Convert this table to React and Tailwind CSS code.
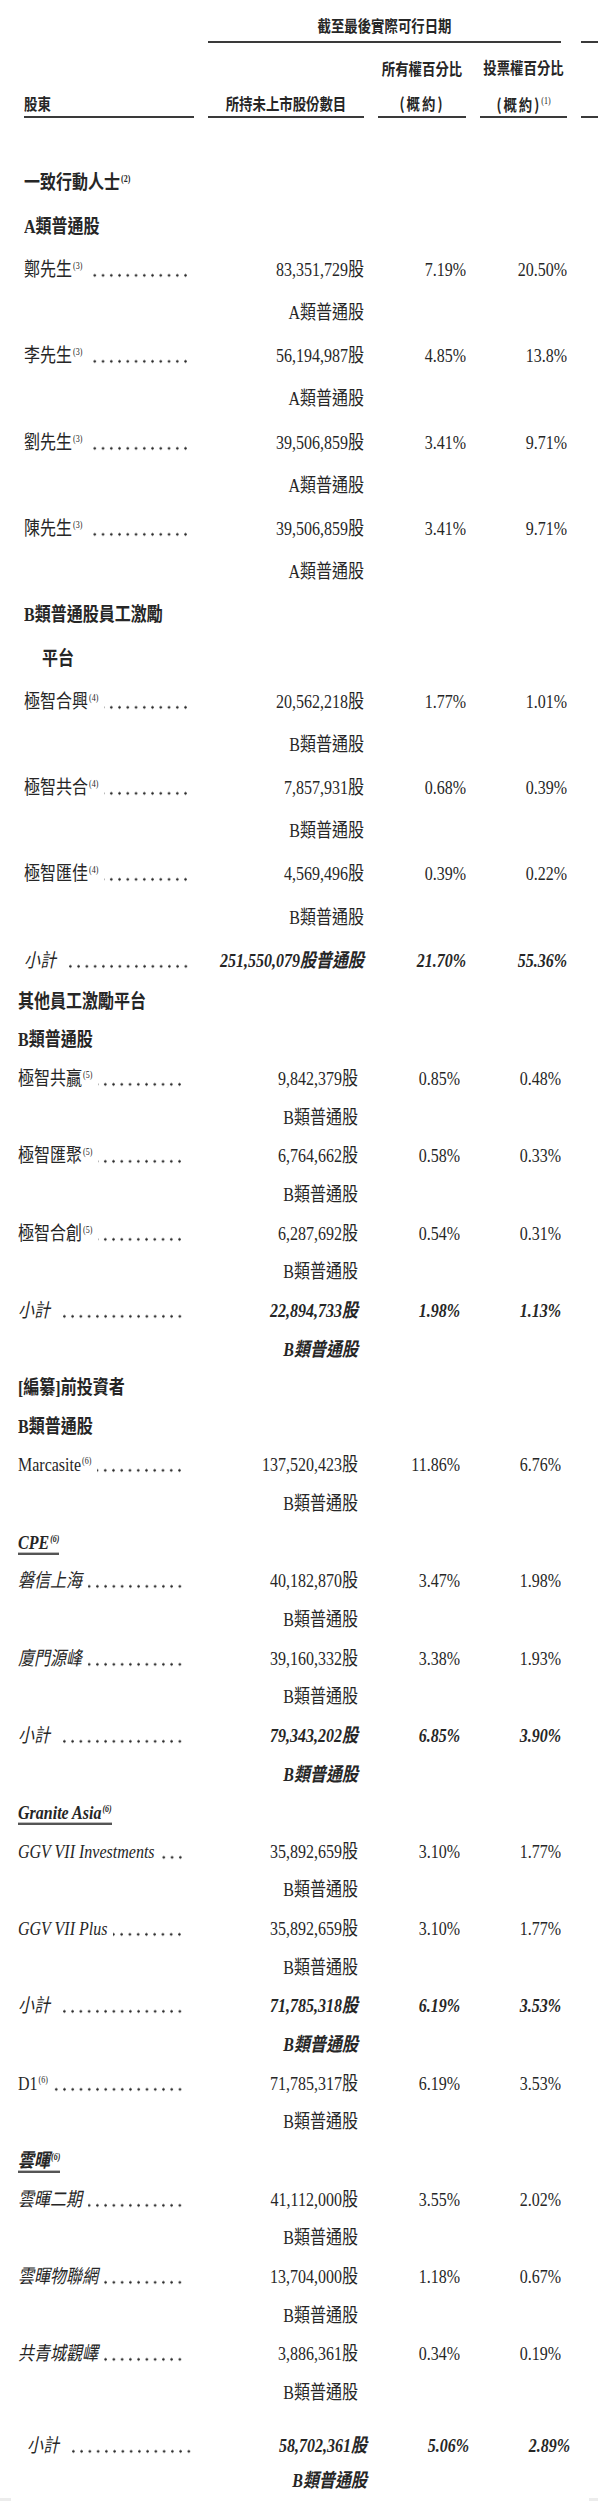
import React from 'react';

const serif = "font-['Liberation_Serif','Noto_Sans_CJK_TC',serif]";
const sans = "font-['Noto_Sans_CJK_TC',sans-serif]";
const cols = 'grid grid-cols-[170px_156px_88px_87px] gap-x-[14px]';
const headCols = 'grid grid-cols-[170px_156px_88px_87px_1fr] gap-x-[14px]';

// section 1: A shares + employee platforms
const part1 = [
    { k: 'group', t: '一致行動人士', sup: '(2)' },
    { k: 'group', t: 'A類普通股' },
    { k: 'row', n: '鄭先生', sup: '(3)', s: '83,351,729股', o: '7.19%', v: '20.50%' },
    { k: 'cls', t: 'A類普通股' },
    { k: 'row', n: '李先生', sup: '(3)', s: '56,194,987股', o: '4.85%', v: '13.8%' },
    { k: 'cls', t: 'A類普通股' },
    { k: 'row', n: '劉先生', sup: '(3)', s: '39,506,859股', o: '3.41%', v: '9.71%' },
    { k: 'cls', t: 'A類普通股' },
    { k: 'row', n: '陳先生', sup: '(3)', s: '39,506,859股', o: '3.41%', v: '9.71%' },
    { k: 'cls', t: 'A類普通股' },
    { k: 'group', t: 'B類普通股員工激勵' },
    { k: 'group', t: '平台', indent: true },
    { k: 'row', n: '極智合興', sup: '(4)', s: '20,562,218股', o: '1.77%', v: '1.01%' },
    { k: 'cls', t: 'B類普通股' },
    { k: 'row', n: '極智共合', sup: '(4)', s: '7,857,931股', o: '0.68%', v: '0.39%' },
    { k: 'cls', t: 'B類普通股' },
    { k: 'row', n: '極智匯佳', sup: '(4)', s: '4,569,496股', o: '0.39%', v: '0.22%' },
    { k: 'cls', t: 'B類普通股' },
    { k: 'sub', s: '251,550,079股普通股', o: '21.70%', v: '55.36%' },
];

// section 2: other platforms + pre-IPO investors
const part2 = [
    { k: 'group', t: '其他員工激勵平台' },
    { k: 'group', t: 'B類普通股' },
    { k: 'row', n: '極智共贏', sup: '(5)', s: '9,842,379股', o: '0.85%', v: '0.48%' },
    { k: 'cls', t: 'B類普通股' },
    { k: 'row', n: '極智匯聚', sup: '(5)', s: '6,764,662股', o: '0.58%', v: '0.33%' },
    { k: 'cls', t: 'B類普通股' },
    { k: 'row', n: '極智合創', sup: '(5)', s: '6,287,692股', o: '0.54%', v: '0.31%' },
    { k: 'cls', t: 'B類普通股' },
    { k: 'sub', s: '22,894,733股', o: '1.98%', v: '1.13%' },
    { k: 'cls', t: 'B類普通股', bi: true },
    { k: 'group', t: '[編纂]前投資者' },
    { k: 'group', t: 'B類普通股' },
    { k: 'row', n: 'Marcasite', sup: '(6)', s: '137,520,423股', o: '11.86%', v: '6.76%' },
    { k: 'cls', t: 'B類普通股' },
    { k: 'ul', t: 'CPE', sup: '(6)' },
    { k: 'row', n: '磐信上海', it: true, s: '40,182,870股', o: '3.47%', v: '1.98%' },
    { k: 'cls', t: 'B類普通股' },
    { k: 'row', n: '廈門源峰', it: true, s: '39,160,332股', o: '3.38%', v: '1.93%' },
    { k: 'cls', t: 'B類普通股' },
    { k: 'sub', s: '79,343,202股', o: '6.85%', v: '3.90%' },
    { k: 'cls', t: 'B類普通股', bi: true },
    { k: 'ul', t: 'Granite Asia', sup: '(6)' },
    { k: 'row', n: 'GGV VII Investments', it: true, s: '35,892,659股', o: '3.10%', v: '1.77%' },
    { k: 'cls', t: 'B類普通股' },
    { k: 'row', n: 'GGV VII Plus', it: true, s: '35,892,659股', o: '3.10%', v: '1.77%' },
    { k: 'cls', t: 'B類普通股' },
    { k: 'sub', s: '71,785,318股', o: '6.19%', v: '3.53%' },
    { k: 'cls', t: 'B類普通股', bi: true },
    { k: 'row', n: 'D1', sup: '(6)', s: '71,785,317股', o: '6.19%', v: '3.53%' },
    { k: 'cls', t: 'B類普通股' },
    { k: 'ul', t: '雲暉', sup: '(6)' },
    { k: 'row', n: '雲暉二期', it: true, s: '41,112,000股', o: '3.55%', v: '2.02%' },
    { k: 'cls', t: 'B類普通股' },
    { k: 'row', n: '雲暉物聯網', it: true, s: '13,704,000股', o: '1.18%', v: '0.67%' },
    { k: 'cls', t: 'B類普通股' },
    { k: 'row', n: '共青城觀嶧', it: true, s: '3,886,361股', o: '0.34%', v: '0.19%' },
    { k: 'cls', t: 'B類普通股' },
];

function Sup({ children, italic }) {
    return <span className={`text-[8px] align-super leading-none ml-[1px] ${italic ? 'italic' : ''}`}>{children}</span>;
}

// dotted leader, tiled from the right so every row ends at the same x
function Leader() {
    return (
        <span className="flex-1 min-w-0 self-end h-[3px] mb-[4px] ml-[6px] mr-[4px] bg-[radial-gradient(circle,#2a2a2a_0.9px,transparent_1.4px)] bg-[length:8.25px_3px] bg-repeat-x bg-right" />
    );
}

function Row({ r, h }) {
    const base = `${cols} items-center ${h}`;
    const sc = 'scale-y-[1.2]';

    if (r.k === 'group') {
        return (
            <div className={base}>
                <div className={`col-span-4 font-bold ${sc} ${r.indent ? 'pl-[18px]' : ''}`}>
                    {r.t}
                    {r.sup && <Sup>{r.sup}</Sup>}
                </div>
            </div>
        );
    }

    if (r.k === 'ul') {
        return (
            <div className={base}>
                <div className={`col-span-4 ${sc}`}>
                    <span className="inline-block font-bold italic leading-[17px] border-b-2 border-[#555]">
                        {r.t}
                        <Sup italic>{r.sup}</Sup>
                    </span>
                </div>
            </div>
        );
    }

    if (r.k === 'cls') {
        return (
            <div className={base}>
                <div className={`col-start-2 text-right whitespace-nowrap ${sc} ${r.bi ? 'font-bold italic' : ''}`}>{r.t}</div>
            </div>
        );
    }

    const isSub = r.k === 'sub';
    const val = `text-right whitespace-nowrap ${sc} ${isSub ? 'font-bold italic' : ''}`;
    return (
        <div className={base}>
            <div className={`flex items-center whitespace-nowrap ${sc}`}>
                <span className={`shrink-0 ${isSub || r.it ? 'italic' : ''}`}>
                    {isSub ? '小計' : r.n}
                    {r.sup && <Sup>{r.sup}</Sup>}
                </span>
                {isSub && <span className="w-[6px] shrink-0" />}
                <Leader />
            </div>
            <div className={val}>{r.s}</div>
            <div className={val}>{r.o}</div>
            <div className={val}>{r.v}</div>
        </div>
    );
}

function Header() {
    const txt = `inline-block scale-y-[1.2] ${sans} font-semibold text-[13.4px] leading-[18px]`;
    const cell = 'flex flex-col justify-end items-center pb-[4px] border-b-2 border-[#3a3a3a]';
    return (
        <div>
            <div className={headCols}>
                <div className="col-start-2 col-span-3 mr-[6px] pt-[16px] pb-[5px] border-b-2 border-[#3a3a3a] text-center">
                    <span className={txt}>截至最後實際可行日期</span>
                </div>
                <div className="border-b-2 border-[#3a3a3a]" />
            </div>
            <div className={headCols}>
                <div className={`${cell} items-start`}>
                    <span className={txt}>股東</span>
                </div>
                <div className={cell}>
                    <span className={txt}>所持未上市股份數目</span>
                </div>
                <div className={`${cell} pt-[15px]`}>
                    <span className={txt}>所有權百分比</span>
                    <span className={`${txt} mt-[17px] tracking-[2px]`}>(概約)</span>
                </div>
                <div className={`${cell} pt-[15px]`}>
                    <span className={txt}>投票權百分比</span>
                    <span className={`${txt} mt-[17px]`}>
                        <span className="tracking-[2px]">(概約)</span>
                        <span className={`${serif} text-[8px] align-super font-normal`}>(1)</span>
                    </span>
                </div>
                <div className="border-b-2 border-[#3a3a3a]" />
            </div>
        </div>
    );
}

export default function App() {
    return (
        <div className={`w-[598px] h-[2501px] overflow-hidden bg-white text-[#262626] text-[16px] leading-[20px] ${serif}`}>
            <div className="pl-[24px]">
                <Header />
                <div className="mt-[43.4px]">
                    {part1.map((r, i) => (
                        <Row key={i} r={r} h="h-[43.2px]" />
                    ))}
                </div>
            </div>
            <div className="pl-[18px]">
                {part2.map((r, i) => (
                    <Row key={i} r={r} h="h-[38.65px]" />
                ))}
            </div>
            <div className="pl-[27px] pt-[14.75px]">
                <Row r={{ k: 'sub', s: '58,702,361股', o: '5.06%', v: '2.89%' }} h="h-[38px]" />
                <Row r={{ k: 'cls', t: 'B類普通股', bi: true }} h="h-[33px]" />
            </div>
            <div className="flex justify-between h-[8px]">
                <div className="w-[11px] bg-[#ececec]" />
                <div className="w-[9px] bg-[#ececec]" />
            </div>
        </div>
    );
}
